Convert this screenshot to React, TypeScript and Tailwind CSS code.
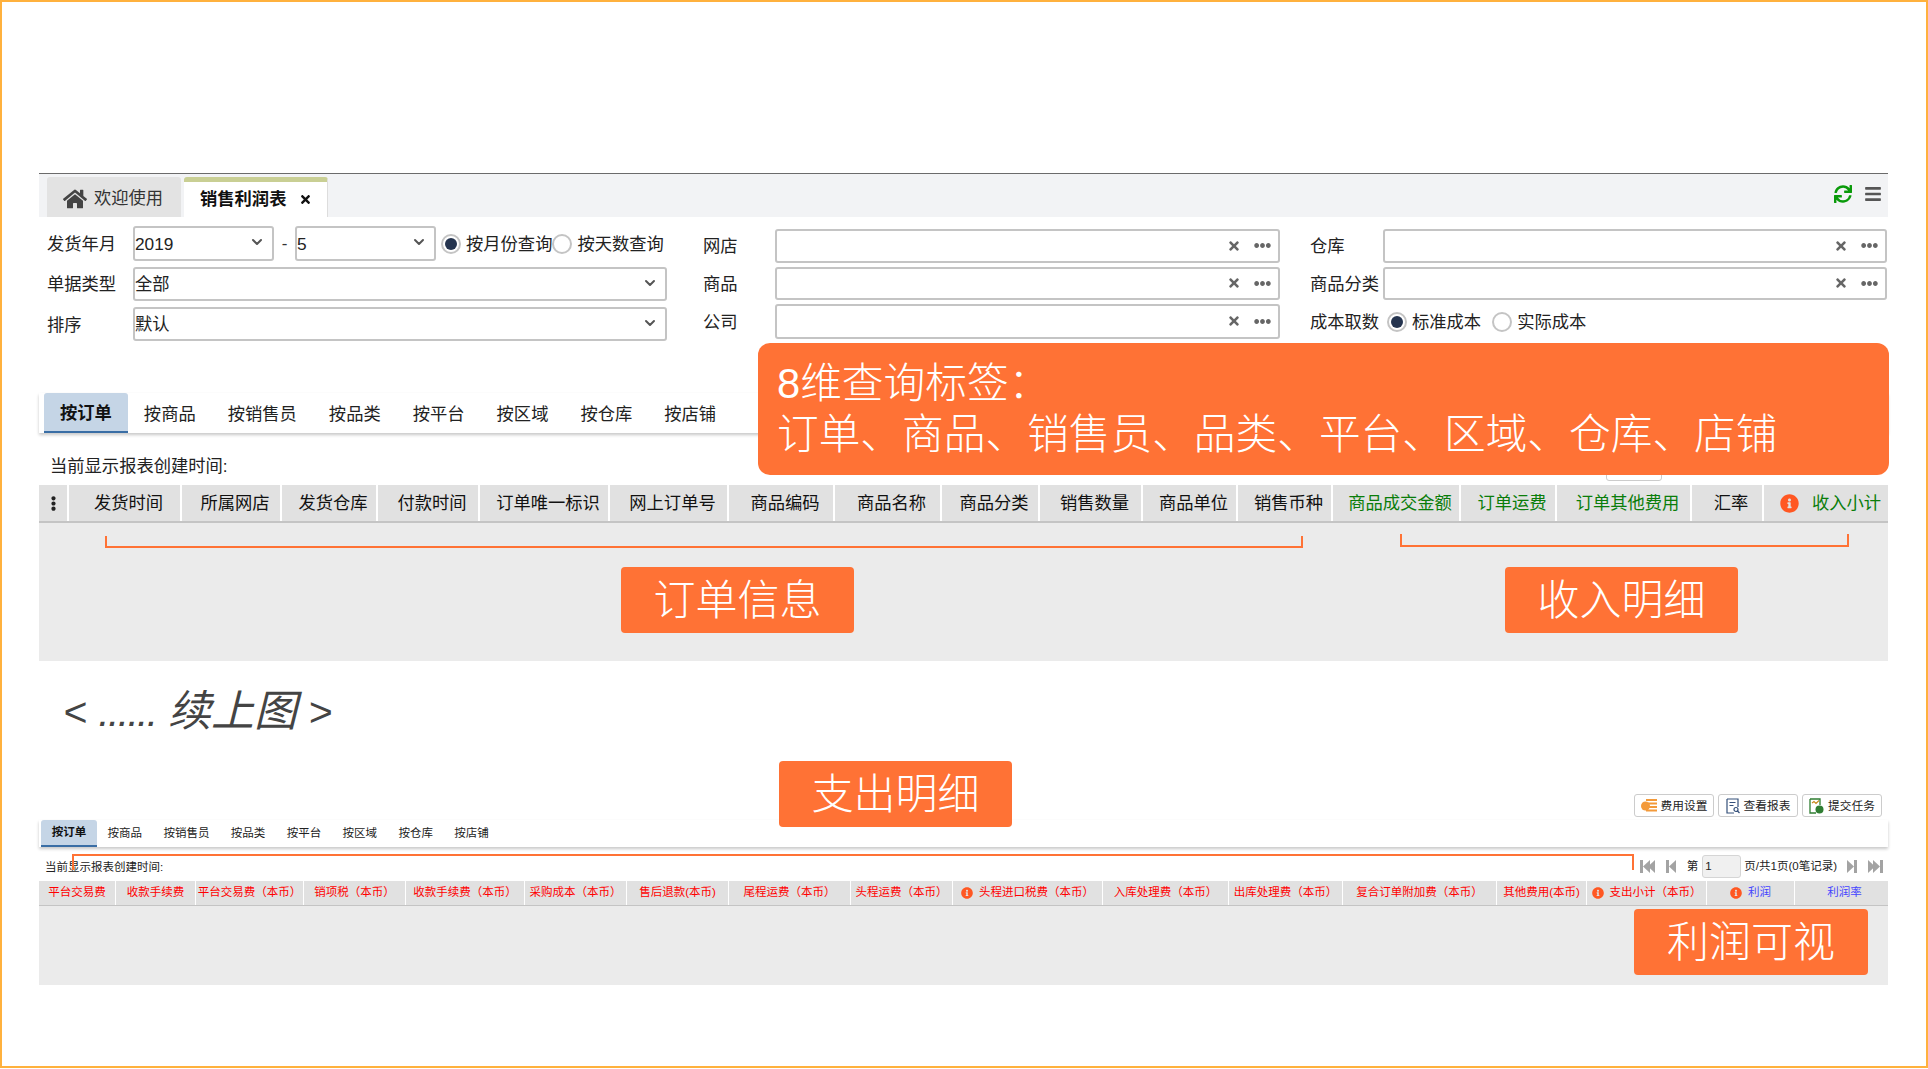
import { ChevronDown } from "lucide-react";
import { FaEllipsisH, FaEllipsisV, FaHome, FaInfoCircle, FaTimes, FaBars, FaSync } from "react-icons/fa";

const font = "font-['Liberation_Sans','Noto_Sans_CJK_SC',sans-serif]";

const groupTabs = ["按订单", "按商品", "按销售员", "按品类", "按平台", "按区域", "按仓库", "按店铺"];

const mainCols = [
  { label: "发货时间", w: "w-[113px]", c: "text-[#111]" },
  { label: "所属网店", w: "w-[100px]", c: "text-[#111]" },
  { label: "发货仓库", w: "w-[96px]", c: "text-[#111]" },
  { label: "付款时间", w: "w-[102px]", c: "text-[#111]" },
  { label: "订单唯一标识", w: "w-[130px]", c: "text-[#111]" },
  { label: "网上订单号", w: "w-[119px]", c: "text-[#111]" },
  { label: "商品编码", w: "w-[106px]", c: "text-[#111]" },
  { label: "商品名称", w: "w-[107px]", c: "text-[#111]" },
  { label: "商品分类", w: "w-[98px]", c: "text-[#111]" },
  { label: "销售数量", w: "w-[103px]", c: "text-[#111]" },
  { label: "商品单位", w: "w-[95px]", c: "text-[#111]" },
  { label: "销售币种", w: "w-[95px]", c: "text-[#111]" },
  { label: "商品成交金额", w: "w-[128px]", c: "text-[#0a7d0a]" },
  { label: "订单运费", w: "w-[96px]", c: "text-[#0a7d0a]" },
  { label: "订单其他费用", w: "w-[135px]", c: "text-[#0a7d0a]" },
  { label: "汇率", w: "w-[72px]", c: "text-[#111]" },
  { label: "收入小计", w: "w-[124px]", c: "text-[#0a7d0a]", info: true },
];

const costCols = [
  { label: "平台交易费", w: "w-[77px]", c: "text-[#f00]" },
  { label: "收款手续费", w: "w-[80px]", c: "text-[#f00]" },
  { label: "平台交易费（本币）", w: "w-[108px]", c: "text-[#f00]" },
  { label: "销项税（本币）", w: "w-[102px]", c: "text-[#f00]" },
  { label: "收款手续费（本币）", w: "w-[119px]", c: "text-[#f00]" },
  { label: "采购成本（本币）", w: "w-[102px]", c: "text-[#f00]" },
  { label: "售后退款(本币)", w: "w-[102px]", c: "text-[#f00]" },
  { label: "尾程运费（本币）", w: "w-[122px]", c: "text-[#f00]" },
  { label: "头程运费（本币）", w: "w-[102px]", c: "text-[#f00]" },
  { label: "头程进口税费（本币）", w: "w-[150px]", c: "text-[#f00]", info: true },
  { label: "入库处理费（本币）", w: "w-[126px]", c: "text-[#f00]" },
  { label: "出库处理费（本币）", w: "w-[114px]", c: "text-[#f00]" },
  { label: "复合订单附加费（本币）", w: "w-[154px]", c: "text-[#f00]" },
  { label: "其他费用(本币)", w: "w-[90px]", c: "text-[#f00]" },
  { label: "支出小计（本币）", w: "w-[120px]", c: "text-[#f00]", info: true },
  { label: "利润", w: "w-[88px]", c: "text-[#4646ff]", info: true },
  { label: "利润率", w: "w-[93px]", c: "text-[#4646ff]" },
];

function SelectBox({ value, className }: { value: string; className: string }) {
  return (
    <div className={`flex items-center justify-between rounded-[3px] border-2 border-[#c4c4c4] bg-white pr-[7px] text-[17.3px] text-[#222] ${className}`}>
      <span className="pt-[2px]">{value}</span>
      <ChevronDown size={16} strokeWidth={3} className="mb-[3px] text-[#555]" />
    </div>
  );
}

function Radio({ on, label, className }: { on?: boolean; label: string; className?: string }) {
  return (
    <div className={`flex items-center text-[17.3px] text-[#222] ${className ?? ""}`}>
      <span className="flex h-[20px] w-[20px] items-center justify-center rounded-full border-2 border-[#c4c4c4] bg-white">
        {on && <span className="h-[12px] w-[12px] rounded-full bg-[#25344f]" />}
      </span>
      <span className="ml-[5px] pt-[2px] whitespace-nowrap">{label}</span>
    </div>
  );
}

function Lookup({ label, className }: { label: string; className: string }) {
  return (
    <div className={`flex items-center ${className}`}>
      <span className="w-[72px] shrink-0 pt-[2px] text-[17.3px] whitespace-nowrap text-[#222]">{label}</span>
      <div className="flex h-full flex-1 items-center justify-end rounded-[3px] border-2 border-[#c4c4c4] bg-white pr-[7px]">
        <FaTimes size={14} className="mb-[1px] text-[#666]" />
        <FaEllipsisH size={17} className="mb-[1px] ml-[13px] text-[#666]" />
      </div>
    </div>
  );
}

function Callout({ text, className }: { text: string; className: string }) {
  return (
    <div className={`absolute flex h-[66px] items-center justify-center rounded-[4px] bg-[#ff7235] text-[42px] font-light text-white ${className}`}>
      {text}
    </div>
  );
}

function GroupTabs({ small }: { small?: boolean }) {
  return (
    <div className={`relative z-0 flex shadow-[0_2px_3px_rgba(0,0,0,0.22)] ${small ? "h-[27px] pl-[2px] text-[11.5px]" : "h-[40px] pl-[5px] text-[17.3px]"}`}>
      {groupTabs.map((t, i) => (
        <div
          key={t}
          className={`flex items-center whitespace-nowrap ${small ? "px-[10.7px]" : "px-[16px] pt-[3px]"} ${
            i === 0
              ? "rounded-t-[3px] border-b-2 border-[#3a6ea5] bg-[#c5d5e6] font-bold text-[#111]"
              : "text-[#222]"
          }`}
        >
          {t}
        </div>
      ))}
    </div>
  );
}

function PagerIcon({ flip, double }: { flip?: boolean; double?: boolean }) {
  return (
    <svg width={double ? 15 : 10} height="13" viewBox={double ? "0 0 15 13" : "0 0 10 13"} className={flip ? "-scale-x-100" : ""}>
      <rect x="0" y="0" width="3" height="13" fill="#a3a3a3" />
      <path d="M10 0v13L3 6.5z" fill="#a3a3a3" />
      {double && <path d="M15 0v13L8 6.5z" fill="#a3a3a3" />}
    </svg>
  );
}

function ToolButton({ label, icon }: { label: string; icon: React.ReactNode }) {
  return (
    <div className="flex h-[23px] w-[80px] items-center justify-center gap-[4px] rounded-[3px] border border-[#ccc] bg-white text-[11.7px] text-[#222]">
      {icon}
      <span className="whitespace-nowrap">{label}</span>
    </div>
  );
}

export default function App() {
  return (
    <div className={`relative h-[1068px] w-[1928px] overflow-hidden border-2 border-[#ffb13d] bg-white pt-[171px] pl-[37px] ${font}`}>
      <div className="w-[1849px]">
        {/* window tabs */}
        <div className="flex h-[44px] items-end justify-between border-t border-[#6b6b6b] bg-[#f2f3f5] pl-[8px]">
          <div className="flex">
            <div className="flex h-[40px] w-[134px] items-center rounded-t-[3px] bg-[#e3e3e3] pt-[3px] pl-[16px] text-[17.3px] text-[#333]">
              <FaHome size={24} className="text-[#444]" />
              <span className="ml-[7px]">欢迎使用</span>
            </div>
            <div className="ml-[3px] flex h-[40px] w-[144px] items-center rounded-t-[3px] border-t-[5px] border-r border-[#c9cf94] border-r-[#ddd] bg-white pl-[16px] text-[17.3px] font-bold text-[#111]">
              <span>销售利润表</span>
              <FaTimes size={13} className="ml-[13px] text-[#111]" />
            </div>
          </div>
          <div className="mr-[6px] mb-[14px] flex items-center">
            <FaSync size={18} className="text-[#0a9a0a]" />
            <FaBars size={18} className="ml-[12px] text-[#555]" />
          </div>
        </div>

        {/* query form */}
        <div className="flex h-[176px]">
          <div className="ml-[8px] flex w-[620px] flex-col gap-[6px] pt-[9px]">
            <div className="flex h-[35px] items-center">
              <span className="w-[86px] pt-[2px] text-[17.3px] text-[#222]">发货年月</span>
              <SelectBox value="2019" className="h-full w-[141px]" />
              <span className="w-[21px] text-center text-[17px] text-[#333]">-</span>
              <SelectBox value="5" className="h-full w-[141px]" />
              <Radio on label="按月份查询" className="ml-[5px]" />
              <Radio label="按天数查询" className="ml-[0px]" />
            </div>
            <div className="flex h-[34px] items-center">
              <span className="w-[86px] pt-[2px] text-[17.3px] text-[#222]">单据类型</span>
              <SelectBox value="全部" className="h-full flex-1" />
            </div>
            <div className="flex h-[34px] items-center">
              <span className="w-[86px] pt-[3px] text-[17.3px] text-[#222]">排序</span>
              <SelectBox value="默认" className="h-full flex-1" />
            </div>
          </div>
          <div className="ml-[36px] flex w-[577px] flex-col gap-[4px] pt-[12px]">
            <Lookup label="网店" className="h-[34px]" />
            <Lookup label="商品" className="h-[33px]" />
            <Lookup label="公司" className="h-[35px]" />
          </div>
          <div className="ml-[30px] flex w-[577px] flex-col gap-[4px] pt-[12px]">
            <Lookup label="仓库" className="h-[34px] [&>span]:w-[73px]" />
            <Lookup label="商品分类" className="h-[33px] [&>span]:w-[73px]" />
            <div className="flex h-[35px] items-center">
              <span className="w-[77px] pt-[2px] text-[17.3px] text-[#222]">成本取数</span>
              <Radio on label="标准成本" />
              <Radio label="实际成本" className="ml-[11px]" />
            </div>
          </div>
        </div>

        <GroupTabs />

        <div className="flex h-[52px] items-center pt-[16px] pl-[11px] text-[17.3px] text-[#222]">当前显示报表创建时间:</div>

        {/* order + income columns */}
        <div className="flex h-[38px] border-b-2 border-[#c4c4c4] bg-[#e1e1e1] text-[17.3px]">
          <div className="flex w-[30px] items-center justify-center border-r-2 border-white">
            <FaEllipsisV size={15} className="text-[#222]" />
          </div>
          {mainCols.map((c) => (
            <div key={c.label} className={`flex items-center justify-center gap-[13px] border-r-2 border-white pt-[1px] pl-[8px] whitespace-nowrap last:border-r-0 last:pl-[9px] ${c.w} ${c.c}`}>
              {c.info && <FaInfoCircle size={19} className="text-[#ff5722]" />}
              {c.label}
            </div>
          ))}
        </div>
        <div className="relative h-[138px] bg-[#ebebeb]">
          <div className="absolute top-[13px] left-[66px] h-[12px] w-[1198px] border-r-2 border-b-2 border-l-2 border-[#ff7235]" />
          <div className="absolute top-[11px] left-[1361px] h-[13px] w-[449px] border-r-2 border-b-2 border-l-2 border-[#ff7235]" />
        </div>

        {/* continuation */}
        <div className="flex h-[156px] flex-col justify-between">
          <div className="pt-[25px] pl-[24px] text-[41px] leading-[50px] text-[#444] italic">
            &lt; <span className="tracking-[-1.7px]">......</span> <span className="text-[43px]">续上图</span> &gt;
          </div>
          <div className="flex justify-end gap-[4px] pr-[6px]">
            <ToolButton
              label="费用设置"
              icon={
                <svg width="16" height="13" viewBox="0 0 16 13">
                  <path d="M5 1h11M7 4.5h9M7 8h9M5 11.5h11" stroke="#f39a3a" strokeWidth="2" />
                  <circle cx="4.5" cy="7" r="4.5" fill="#f39a3a" />
                </svg>
              }
            />
            <ToolButton
              label="查看报表"
              icon={
                <svg width="14" height="16" viewBox="0 0 14 16" fill="none">
                  <path d="M1 1h11v8M1 1v14h7" stroke="#34507a" strokeWidth="1.2" />
                  <path d="M3.5 4.5h6M3.5 7.5h4" stroke="#34507a" strokeWidth="1.2" />
                  <circle cx="10" cy="11.5" r="2" stroke="#34507a" strokeWidth="1.2" />
                  <path d="M11.5 13l2 2" stroke="#34507a" strokeWidth="1.2" />
                </svg>
              }
            />
            <ToolButton
              label="提交任务"
              icon={
                <svg width="15" height="16" viewBox="0 0 15 16" fill="none">
                  <path d="M1 1h10v6M1 1v14h6" stroke="#2f7d32" strokeWidth="1.3" />
                  <path d="M3 5l2-1.5 2 2 3-3" stroke="#c98a1f" strokeWidth="1.2" />
                  <circle cx="10.5" cy="11.5" r="4" fill="#2f7d32" />
                </svg>
              }
            />
          </div>
        </div>

        <div className="mt-[3px]">
          <GroupTabs small />
        </div>

        {/* caption and pager */}
        <div className="flex h-[34px] items-end pb-[3px] text-[11.5px] text-[#222]">
          <span className="mb-[2px] ml-[6px]">当前显示报表创建时间:</span>
          <div className="ml-auto flex items-center pr-[5px]">
            <PagerIcon double />
            <span className="ml-[11px]"><PagerIcon /></span>
            <span className="ml-[11px]">第</span>
            <span className="ml-[4px] flex h-[23px] w-[39px] items-center rounded-[3px] border border-[#d5d5d5] bg-[#f0f0f0] pl-[2px]">1</span>
            <span className="mr-[10px] ml-[3px] whitespace-nowrap">页/共1页(0笔记录)</span>
            <PagerIcon flip />
            <span className="ml-[11px]"><PagerIcon flip double /></span>
          </div>
        </div>

        {/* cost columns */}
        <div className="flex h-[25px] border-b border-[#c4c4c4] bg-[#e1e1e1] text-[11.5px]">
          {costCols.map((c) => (
            <div key={c.label} className={`flex items-center justify-center gap-[6px] overflow-hidden border-r border-white whitespace-nowrap last:border-r-0 last:pl-[6px] ${c.w} ${c.c}`}>
              {c.info && <FaInfoCircle size={12} className="shrink-0 text-[#ff5722]" />}
              {c.label}
            </div>
          ))}
        </div>
        <div className="h-[79px] bg-[#ebebeb]" />
      </div>

      {/* annotations */}
      <div className="absolute top-[341px] left-[756px] z-10 h-[132px] w-[1131px] rounded-[12px] bg-[#ff7235] pt-[15px] pl-[19px] text-[41.7px] leading-[51px] font-light whitespace-nowrap text-white">
        <div>8维查询标签：</div>
        <div>订单、商品、销售员、品类、平台、区域、仓库、店铺</div>
      </div>
      <div className="absolute top-[468px] left-[1604px] h-[11px] w-[56px] rounded-b-[3px] border border-[#ccc] bg-white" />
      <Callout text="订单信息" className="top-[565px] left-[619px] w-[233px]" />
      <Callout text="收入明细" className="top-[565px] left-[1503px] w-[233px]" />
      <Callout text="支出明细" className="top-[759px] left-[777px] w-[233px]" />
      <Callout text="利润可视" className="top-[907px] left-[1632px] w-[234px]" />
      <div className="absolute top-[852px] left-[70px] h-[16px] w-[1562px] border-t-2 border-r-2 border-l-2 border-[#ff7235]" />
    </div>
  );
}
